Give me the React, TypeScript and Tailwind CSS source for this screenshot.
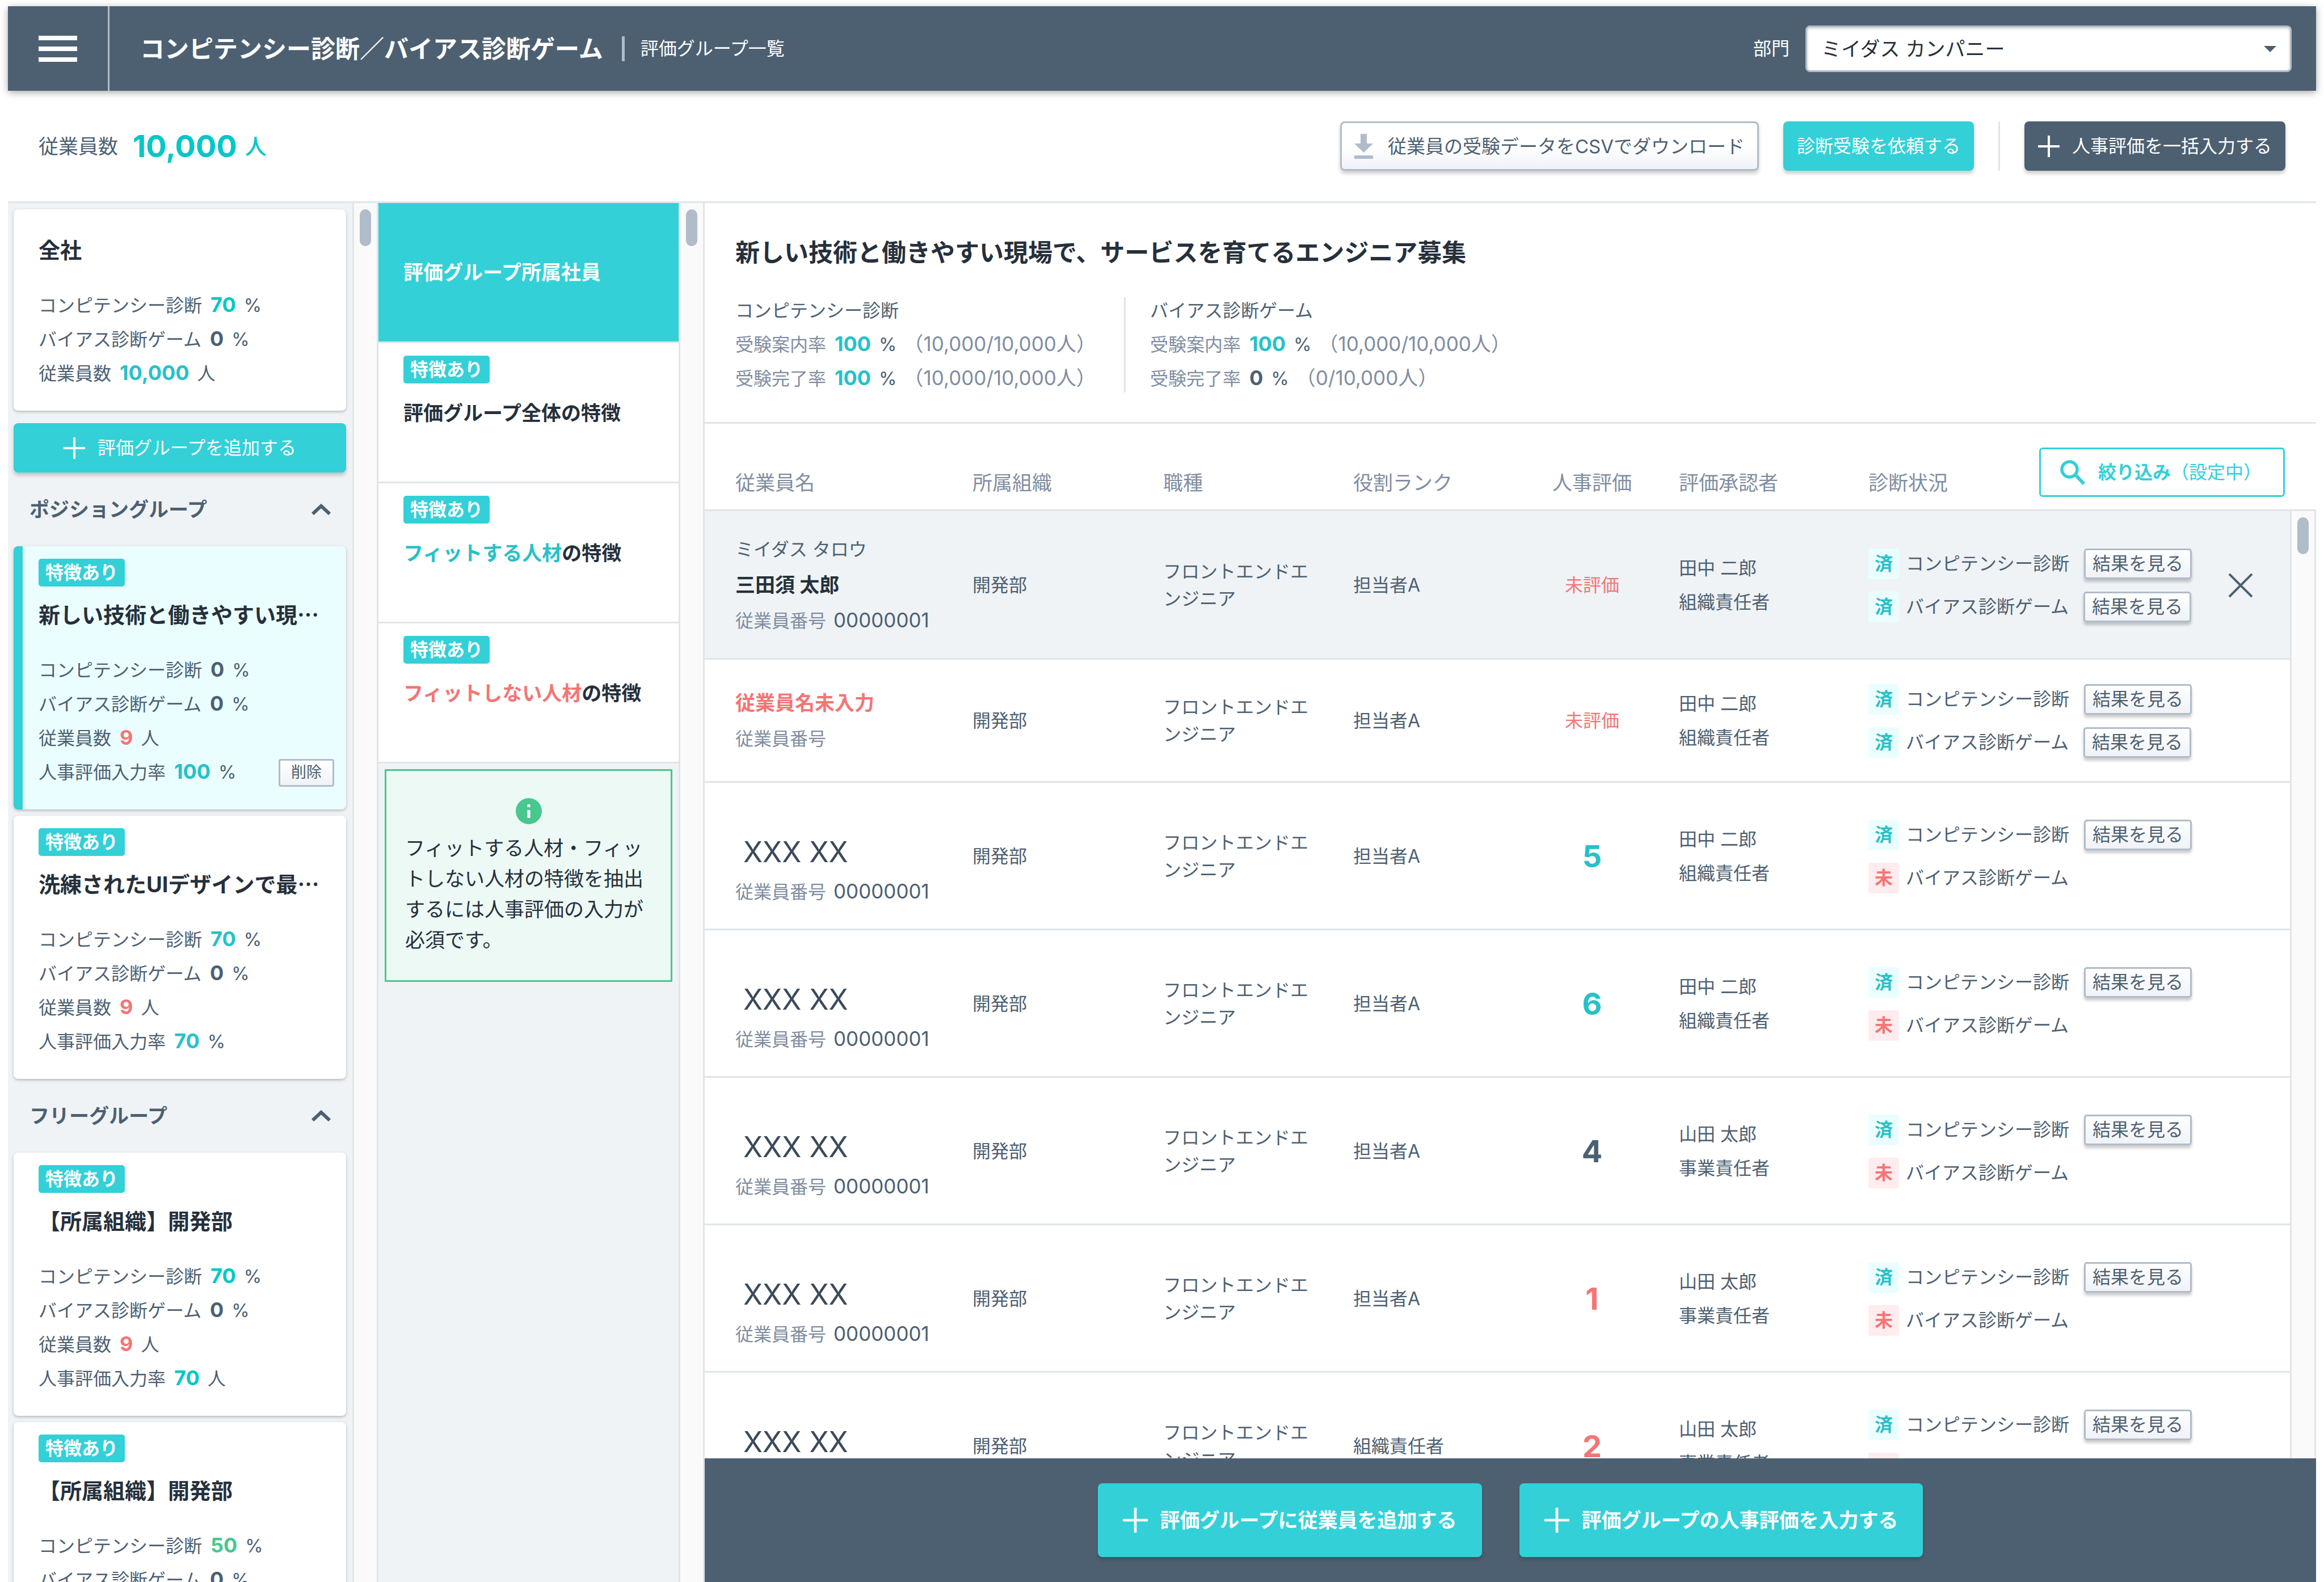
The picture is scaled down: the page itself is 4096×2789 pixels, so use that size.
import React, { useState } from 'react';

type Tone = 'cyan' | 'teal' | 'green' | 'red' | 'slate';

interface Stat {
  label: string;
  value: string;
  unit: string;
  tone: Tone;
}

interface Group {
  id: number;
  title: string;
  truncated?: boolean;
  stats: Stat[];
}

interface Employee {
  id: number;
  kana?: string;
  name?: string;
  placeholder?: string;
  no?: string;
  rank: string;
  score?: string;
  scoreTone: Tone;
  approver: string;
  approverRole: string;
  biasDone: boolean;
}

const tones: Record<Tone, string> = {
  cyan: 'text-[#00c8c8]',
  teal: 'text-[#27c1c9]',
  green: 'text-[#48c78e]',
  red: 'text-[#f47575]',
  slate: 'text-[#4d6071]',
};

const companyStats: Stat[] = [
  { label: 'コンピテンシー診断', value: '70', unit: '%', tone: 'cyan' },
  { label: 'バイアス診断ゲーム', value: '0', unit: '%', tone: 'slate' },
  { label: '従業員数', value: '10,000', unit: '人', tone: 'teal' },
];

const positionGroups: Group[] = [
  {
    id: 1,
    title: '新しい技術と働きやすい現',
    truncated: true,
    stats: [
      { label: 'コンピテンシー診断', value: '0', unit: '%', tone: 'slate' },
      { label: 'バイアス診断ゲーム', value: '0', unit: '%', tone: 'slate' },
      { label: '従業員数', value: '9', unit: '人', tone: 'red' },
      { label: '人事評価入力率', value: '100', unit: '%', tone: 'teal' },
    ],
  },
  {
    id: 2,
    title: '洗練されたUIデザインで最',
    truncated: true,
    stats: [
      { label: 'コンピテンシー診断', value: '70', unit: '%', tone: 'teal' },
      { label: 'バイアス診断ゲーム', value: '0', unit: '%', tone: 'slate' },
      { label: '従業員数', value: '9', unit: '人', tone: 'red' },
      { label: '人事評価入力率', value: '70', unit: '%', tone: 'teal' },
    ],
  },
];

const freeGroups: Group[] = [
  {
    id: 3,
    title: '【所属組織】開発部',
    stats: [
      { label: 'コンピテンシー診断', value: '70', unit: '%', tone: 'cyan' },
      { label: 'バイアス診断ゲーム', value: '0', unit: '%', tone: 'slate' },
      { label: '従業員数', value: '9', unit: '人', tone: 'red' },
      { label: '人事評価入力率', value: '70', unit: '人', tone: 'cyan' },
    ],
  },
  {
    id: 4,
    title: '【所属組織】開発部',
    stats: [
      { label: 'コンピテンシー診断', value: '50', unit: '%', tone: 'green' },
      { label: 'バイアス診断ゲーム', value: '0', unit: '%', tone: 'slate' },
    ],
  },
];

const employees: Employee[] = [
  { id: 1, kana: 'ミイダス タロウ', name: '三田須 太郎', no: '00000001', rank: '担当者A', scoreTone: 'red', approver: '田中 二郎', approverRole: '組織責任者', biasDone: true },
  { id: 2, rank: '担当者A', scoreTone: 'red', approver: '田中 二郎', approverRole: '組織責任者', biasDone: true },
  { id: 3, placeholder: 'XXX XX', no: '00000001', rank: '担当者A', score: '5', scoreTone: 'teal', approver: '田中 二郎', approverRole: '組織責任者', biasDone: false },
  { id: 4, placeholder: 'XXX XX', no: '00000001', rank: '担当者A', score: '6', scoreTone: 'teal', approver: '田中 二郎', approverRole: '組織責任者', biasDone: false },
  { id: 5, placeholder: 'XXX XX', no: '00000001', rank: '担当者A', score: '4', scoreTone: 'slate', approver: '山田 太郎', approverRole: '事業責任者', biasDone: false },
  { id: 6, placeholder: 'XXX XX', no: '00000001', rank: '担当者A', score: '1', scoreTone: 'red', approver: '山田 太郎', approverRole: '事業責任者', biasDone: false },
  { id: 7, placeholder: 'XXX XX', no: '00000001', rank: '組織責任者', score: '2', scoreTone: 'red', approver: '山田 太郎', approverRole: '事業責任者', biasDone: false },
];

const PlusIcon = ({ className }: { className: string }) => (
  <svg viewBox="0 0 38 38" className={className} fill="currentColor" aria-hidden="true">
    <path d="M17 0h4v17h17v4H21v17h-4V21H0v-4h17z" />
  </svg>
);

const Badge = () => (
  <span className="flex h-[49px] w-[152px] items-center justify-center rounded-[5px] bg-[#33d0d8] font-bold text-white">
    特徴あり
  </span>
);

const StatValue = ({ value, tone }: { value: string; tone: Tone }) => (
  <b className={`pr-[14px] pl-[15px] text-[36px] leading-none font-bold ${tones[tone]}`}>{value}</b>
);

const StatLine = ({ stat, children }: { stat: Stat; children?: React.ReactNode }) => (
  <li className="flex items-center justify-between leading-[60px]">
    <span>
      {stat.label}
      <StatValue value={stat.value} tone={stat.tone} />
      {stat.unit}
    </span>
    {children}
  </li>
);

const GroupCard = ({ group, selected, onSelect }: { group: Group; selected: boolean; onSelect: () => void }) => (
  <article
    onClick={onSelect}
    className={`rounded-[8px] pt-[22px] pr-[21px] pb-[35px] shadow-[0_2px_5px_rgba(0,0,0,0.25)] ${
      selected ? 'border-l-[16px] border-[#33d0d8] bg-[#ebfeff] pl-[28px]' : 'bg-white pl-[44px]'
    }`}
  >
    <Badge />
    <h3 className="mt-[20px] text-[38px] leading-[60px] font-bold whitespace-nowrap text-[#26303b]">
      {group.title}
      {group.truncated && <span className="font-['Noto_Sans_CJK_JP',sans-serif] leading-none">…</span>}
    </h3>
    <ul className="mt-[38px]">
      {group.stats.map((stat, index) => (
        <StatLine key={stat.label} stat={stat}>
          {selected && index === group.stats.length - 1 && (
            <button className="h-[49px] w-[98px] rounded-[4px] border-[3px] border-[#b0bcc9] bg-linear-to-b from-white to-[#f0f2f7] text-[27px] leading-[40px]">
              削除
            </button>
          )}
        </StatLine>
      ))}
    </ul>
  </article>
);

const GroupHeading = ({ title }: { title: string }) => (
  <button className="flex h-[130px] w-full items-center justify-between pr-[27px] pl-[28px] text-[35px] font-bold">
    {title}
    <svg viewBox="0 0 34 20" className="h-[20px] w-[34px]" fill="none" stroke="currentColor" strokeWidth="6" aria-hidden="true">
      <path d="M2 18 17 4l15 14" />
    </svg>
  </button>
);

const ScrollTrack = ({ className }: { className?: string }) => (
  <div className={`shrink-0 border-x-[3px] border-[#e0e5e9] bg-[#fafafa] pt-[11px] ${className}`}>
    <div className="mx-auto h-[65px] w-[20px] rounded-full bg-[#b0bcc9]" />
  </div>
);

const FeatureItem = ({ highlight, tone, text }: { highlight?: string; tone?: Tone; text: string }) => (
  <li className="h-[247px] border-b-[3px] border-[#e0e5e9] bg-white px-[44px] pt-[22px]">
    <Badge />
    <p className="mt-[22px] text-[35px] leading-[60px] font-bold text-[#26303b]">
      {highlight && tone && <span className={tones[tone]}>{highlight}</span>}
      {text}
    </p>
  </li>
);

const RateLine = ({ label, value, tone, detail }: { label: string; value: string; tone: Tone; detail: string }) => (
  <p className="text-[#808da0]">
    {label}
    <StatValue value={value} tone={tone} />
    <span className="text-[#4d6071]">%</span>
    <span className="ml-[12px] text-[35px] leading-none">{detail}</span>
  </p>
);

const StatusLine = ({ label, done }: { label: string; done: boolean }) => (
  <div className="flex h-[54px] items-center">
    <span
      className={`mr-[12px] flex size-[54px] items-center justify-center rounded-[4px] font-bold ${
        done ? 'bg-[#ebfeff] text-[#27c1c9]' : 'bg-[#ffecee] text-[#f47575]'
      }`}
    >
      {done ? '済' : '未'}
    </span>
    {label}
    {done && (
      <button className="ml-[26px] h-[54px] w-[190px] rounded-[5px] border-[3px] border-[#b0bcc9] bg-linear-to-b from-white to-[#f0f2f7] leading-[46px] shadow-[0_5px_5px_rgba(0,0,0,0.2)]">
        結果を見る
      </button>
    )}
  </div>
);

const EmployeeNo = ({ no }: { no?: string }) => (
  <p className="leading-[63px] text-[#808da0]">
    従業員番号 <span className="ml-[4px] text-[35px] leading-none text-[#4d6071]">{no}</span>
  </p>
);

const EmployeeName = ({ employee }: { employee: Employee }) => {
  if (employee.placeholder) {
    return (
      <div className="pt-[56px]">
        <p className="mb-[7px] pl-[14px] text-[50px] leading-[63px] text-[#3a4a5a]">{employee.placeholder}</p>
        <EmployeeNo no={employee.no} />
      </div>
    );
  }
  return (
    <div className="leading-[63px]">
      {employee.kana && <p>{employee.kana}</p>}
      {employee.name ? (
        <p className="text-[35px] font-bold text-[#26303b]">{employee.name}</p>
      ) : (
        <p className="text-[35px] font-bold text-[#f47575]">従業員名未入力</p>
      )}
      <EmployeeNo no={employee.no} />
    </div>
  );
};

const Columns = () => (
  <colgroup>
    <col className="w-[472px]" />
    <col className="w-[336px]" />
    <col className="w-[335px]" />
    <col className="w-[321px]" />
    <col className="w-[200px]" />
    <col className="w-[387px]" />
    <col className="w-[590px]" />
    <col />
  </colgroup>
);

const App: React.FC = () => {
  const [selectedGroup, setSelectedGroup] = useState(1);

  return (
    <div
      lang="ja"
      className="flex h-screen flex-col overflow-hidden bg-white px-[14px] pt-[11px] font-['Inter','Noto_Sans_CJK_JP',sans-serif] text-[32px] leading-[48px] text-[#4d6071]"
    >
      {/* Header */}
      <header className="relative flex h-[149px] shrink-0 items-center bg-[#4d6071] pr-[43px] text-white shadow-[0_3px_12px_rgba(0,0,0,0.35)]">
        <button
          aria-label="メニュー"
          className="flex h-full w-[179px] flex-col items-center justify-center gap-[11px] border-r-[3px] border-[#b0bcc9]"
        >
          <span className="h-[8px] w-[68px] bg-white" />
          <span className="h-[8px] w-[68px] bg-white" />
          <span className="h-[8px] w-[68px] bg-white" />
        </button>
        <h1 className="ml-[54px] text-[43px] font-bold">コンピテンシー診断／バイアス診断ゲーム</h1>
        <span className="mr-[28px] ml-[33px] h-[44px] w-[5px] bg-[#b0bcc9]" />
        <span>評価グループ一覧</span>
        <label htmlFor="department" className="mr-[28px] ml-auto">
          部門
        </label>
        <div className="relative w-[857px]">
          <select
            id="department"
            className="h-[82px] w-full appearance-none rounded-[8px] border-[3px] border-[#b0bcc9] bg-white pl-[25px] text-[35px] text-[#26303b] shadow-[inset_0_2px_5px_rgba(0,0,0,0.2)]"
          >
            <option>ミイダス カンパニー</option>
          </select>
          <svg viewBox="0 0 22 11" className="pointer-events-none absolute top-[36px] right-[27px] h-[11px] w-[22px]" fill="#4d6071" aria-hidden="true">
            <path d="M0 0h22L11 11z" />
          </svg>
        </div>
      </header>

      {/* Toolbar */}
      <div className="flex h-[198px] shrink-0 items-center border-b-[3px] border-[#e0e5e9] px-[54px]">
        <p className="flex items-center text-[35px]">
          従業員数
          <b className="mr-[14px] ml-[26px] text-[54px] text-[#00c8c8]">10,000</b>
          <span className="text-[38px] font-medium text-[#00c8c8]">人</span>
        </p>
        <button className="ml-auto flex h-[87px] items-center rounded-[8px] border-[3px] border-[#b0bcc9] bg-linear-to-b from-white from-50% to-[#f0f2f7] px-[22px] text-[33px] shadow-[0_5px_6px_rgba(0,0,0,0.2)]">
          <svg viewBox="0 0 33 44" className="mr-[26px] h-[44px] w-[33px]" fill="#b0bcc9" aria-hidden="true">
            <path d="M11 0h11v17h11L16.500 33 0 17h11zM0 38h33v6H0z" />
          </svg>
          従業員の受験データをCSVでダウンロード
        </button>
        <button className="ml-[43px] h-[87px] rounded-[8px] bg-[#33d0d8] px-[24px] text-white shadow-[0_5px_6px_rgba(0,0,0,0.2)]">
          診断受験を依頼する
        </button>
        <span className="mx-[43px] h-[87px] w-[3px] bg-[#e0e5e9]" />
        <button className="flex h-[87px] items-center rounded-[8px] bg-[#4d6071] px-[24px] text-white shadow-[0_5px_6px_rgba(0,0,0,0.2)]">
          <PlusIcon className="mr-[22px] size-[38px]" />
          人事評価を一括入力する
        </button>
      </div>

      <div className="flex min-h-0 grow">
        {/* Group list */}
        <aside className="w-[607px] shrink-0 overflow-hidden bg-[#eff3f6] pt-[11px] pr-[11px] pl-[10px]">
          <article className="rounded-[8px] bg-white px-[44px] pt-[42px] pb-[35px] shadow-[0_2px_5px_rgba(0,0,0,0.25)]">
            <h3 className="text-[38px] leading-[60px] font-bold text-[#26303b]">全社</h3>
            <ul className="mt-[38px]">
              {companyStats.map((stat) => (
                <StatLine key={stat.label} stat={stat} />
              ))}
            </ul>
          </article>
          <button className="mt-[22px] flex h-[87px] w-full items-center justify-center rounded-[8px] bg-[#33d0d8] text-white shadow-[0_5px_6px_rgba(0,0,0,0.2)]">
            <PlusIcon className="mr-[22px] size-[38px]" />
            評価グループを追加する
          </button>
          <GroupHeading title="ポジショングループ" />
          <div className="flex flex-col gap-[11px]">
            {positionGroups.map((group) => (
              <GroupCard
                key={group.id}
                group={group}
                selected={group.id === selectedGroup}
                onSelect={() => setSelectedGroup(group.id)}
              />
            ))}
          </div>
          <GroupHeading title="フリーグループ" />
          <div className="flex flex-col gap-[11px]">
            {freeGroups.map((group) => (
              <GroupCard
                key={group.id}
                group={group}
                selected={group.id === selectedGroup}
                onSelect={() => setSelectedGroup(group.id)}
              />
            ))}
          </div>
        </aside>
        <ScrollTrack className="w-[46px]" />

        {/* Features */}
        <nav className="w-[529px] shrink-0 overflow-hidden bg-[#eff3f6]">
          <ul>
            <li className="flex h-[247px] items-center border-b-[3px] border-[#e0e5e9] bg-[#33d0d8] px-[44px] text-[35px] font-bold text-white">
              評価グループ所属社員
            </li>
            <FeatureItem text="評価グループ全体の特徴" />
            <FeatureItem highlight="フィットする人材" tone="teal" text="の特徴" />
            <FeatureItem highlight="フィットしない人材" tone="red" text="の特徴" />
          </ul>
          <div className="mx-[11px] mt-[10px] border-[3px] border-[#48c78e] bg-[#edf9f5] px-[33px] pt-[48px] pb-[44px] text-[35px] leading-[54px] text-[#26303b]">
            <svg viewBox="0 0 46 46" className="mx-auto mb-[15px] size-[46px]" aria-hidden="true">
              <circle cx="23" cy="23" r="23" fill="#48c78e" />
              <path d="M20.500 11h5v5h-5zM20.500 21h5v14h-5z" fill="#fff" />
            </svg>
            <p>フィットする人材・フィットしない人材の特徴を抽出するには人事評価の入力が必須です。</p>
          </div>
        </nav>
        <ScrollTrack className="w-[46px]" />

        {/* Detail */}
        <main className="flex min-w-0 grow flex-col">
          <section className="shrink-0 border-b-[3px] border-[#e0e5e9] px-[54px] pt-[57px] pb-[46px]">
            <h2 className="text-[43px] leading-[60px] font-bold text-[#26303b]">
              新しい技術と働きやすい現場で、サービスを育てるエンジニア募集
            </h2>
            <div className="mt-[43px] flex items-center leading-[60px]">
              <div className="w-[685px]">
                <p>コンピテンシー診断</p>
                <RateLine label="受験案内率" value="100" tone="teal" detail="（10,000/10,000人）" />
                <RateLine label="受験完了率" value="100" tone="teal" detail="（10,000/10,000人）" />
              </div>
              <span className="mr-[43px] h-[168px] w-[3px] bg-[#e0e5e9]" />
              <div>
                <p>バイアス診断ゲーム</p>
                <RateLine label="受験案内率" value="100" tone="teal" detail="（10,000/10,000人）" />
                <RateLine label="受験完了率" value="0" tone="slate" detail="（0/10,000人）" />
              </div>
            </div>
          </section>

          <div className="shrink-0 border-b-[3px] border-[#e0e5e9] pr-[46px]">
            <table className="w-full table-fixed text-left text-[35px] text-[#808da0]">
              <Columns />
              <thead>
                <tr className="h-[151px] align-bottom leading-[50px] *:pb-[22px] *:font-normal">
                  <th className="pl-[54px]">従業員名</th>
                  <th>所属組織</th>
                  <th>職種</th>
                  <th>役割ランク</th>
                  <th className="text-center">人事評価</th>
                  <th className="pl-[53px]">評価承認者</th>
                  <th colSpan={2}>
                    <div className="flex items-end justify-between pr-[9px]">
                      診断状況
                      <button className="flex h-[87px] w-[433px] items-center rounded-[6px] border-[3px] border-[#33d0d8] pl-[34px] text-[32px] text-[#33d0d8]">
                        <svg viewBox="0 0 45 44" className="mr-[22px] h-[44px] w-[45px]" fill="none" stroke="currentColor" aria-hidden="true">
                          <circle cx="16.500" cy="16.500" r="13.500" strokeWidth="5.500" />
                          <path d="m26 26 3 2.500 13 13.500" strokeWidth="6" />
                        </svg>
                        <b>絞り込み</b>（設定中）
                      </button>
                    </div>
                  </th>
                </tr>
              </thead>
            </table>
          </div>

          <div className="flex min-h-0 grow">
            <div className="min-w-0 grow overflow-hidden">
              <table className="w-full table-fixed text-left">
                <Columns />
                <tbody>
                  {employees.map((employee) => (
                    <tr
                      key={employee.id}
                      className={`border-b-[3px] border-[#e0e5e9] *:pt-[3px] ${employee.id === 1 ? 'bg-[#eff3f6]' : 'bg-white'} ${
                        employee.id === 2 ? 'h-[217px]' : 'h-[260px]'
                      }`}
                    >
                      <td className="pl-[54px]">
                        <EmployeeName employee={employee} />
                      </td>
                      <td>開発部</td>
                      <td className="pr-[55px]">フロントエンドエンジニア</td>
                      <td>{employee.rank}</td>
                      <td className={`text-center ${tones[employee.scoreTone]}`}>
                        {employee.score ? <b className="block text-[54px] leading-[54px]">{employee.score}</b> : '未評価'}
                      </td>
                      <td className="pl-[53px] leading-[60px]">
                        <p>{employee.approver}</p>
                        <p>{employee.approverRole}</p>
                      </td>
                      <td>
                        <div className="flex flex-col gap-[22px]">
                          <StatusLine label="コンピテンシー診断" done />
                          <StatusLine label="バイアス診断ゲーム" done={employee.biasDone} />
                        </div>
                      </td>
                      <td className="pl-[44px]">
                        {employee.id === 1 && (
                          <button aria-label="閉じる" className="block">
                            <svg viewBox="0 0 44 44" className="size-[44px]" fill="none" stroke="currentColor" strokeWidth="4" aria-hidden="true">
                              <path d="m2 2 40 40M42 2 2 42" />
                            </svg>
                          </button>
                        )}
                      </td>
                    </tr>
                  ))}
                </tbody>
              </table>
            </div>
            <ScrollTrack className="w-[46px]" />
          </div>

          {/* Footer actions */}
          <footer className="flex h-[218px] shrink-0 items-start justify-center gap-[66px] bg-[#4d6071] pt-[44px] text-[35px] font-bold text-white">
            <button className="flex h-[130px] items-center rounded-[8px] bg-[#33d0d8] px-[44px] shadow-[0_5px_6px_rgba(0,0,0,0.15)]">
              <PlusIcon className="mr-[22px] size-[44px]" />
              評価グループに従業員を追加する
            </button>
            <button className="flex h-[130px] items-center rounded-[8px] bg-[#33d0d8] px-[44px] shadow-[0_5px_6px_rgba(0,0,0,0.15)]">
              <PlusIcon className="mr-[22px] size-[44px]" />
              評価グループの人事評価を入力する
            </button>
          </footer>
        </main>
      </div>
    </div>
  );
};

export default App;
